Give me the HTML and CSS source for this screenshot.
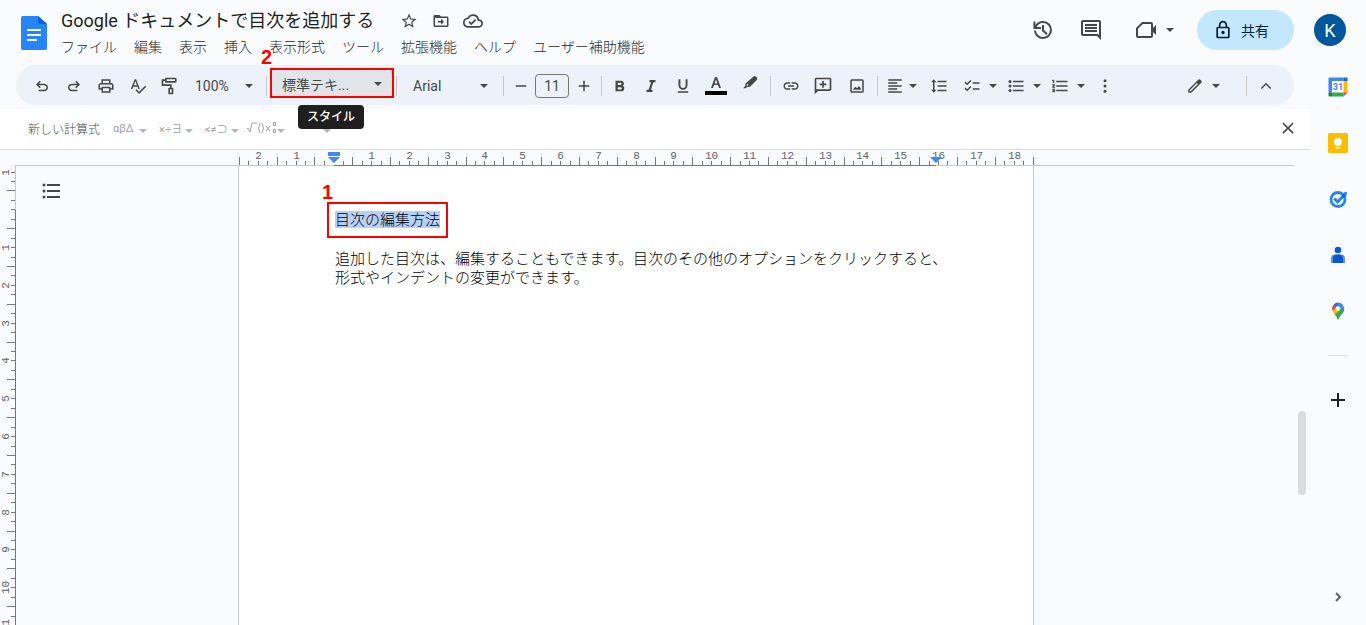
FILE: index.html
```html
<!DOCTYPE html>
<html lang="ja">
<head>
<meta charset="utf-8">
<title>Google ドキュメントで目次を追加する</title>
<link rel="stylesheet" href="styles.css">
</head>
<body>
<div class="app">
  <header class="header">
    <a class="logo" href="#" aria-label="ドキュメント ホーム">
      <svg width="26" height="34" viewBox="0 0 26 34"><path fill="#2684fc" d="M2 0h15l9 8v24a2 2 0 0 1-2 2H2a2 2 0 0 1-2-2V2a2 2 0 0 1 2-2z"/><path fill="#0066da" d="M17 0l9 8h-7a2 2 0 0 1-2-2z"/><path fill="#fff" d="M6 13h14v2H6zM6 18h14v2H6zM6 23h10v2H6z"/></svg>
    </a>
    <div class="heading">
      <div class="title-row">
        <h1 class="title">Google ドキュメントで目次を追加する</h1>
        <button class="mini" aria-label="スター"><svg class="i18" viewBox="0 0 24 24"><path d="M22 9.24l-7.19-.62L12 2 9.19 8.63 2 9.24l5.46 4.73L5.82 21 12 17.27 18.18 21l-1.63-7.03L22 9.24zM12 15.4l-3.76 2.27 1-4.28-3.32-2.88 4.38-.38L12 6.1l1.71 4.04 4.38.38-3.32 2.88 1 4.28L12 15.4z"/></svg></button>
        <button class="mini" aria-label="移動"><svg class="i18" viewBox="0 0 24 24"><path d="M20 6h-8l-2-2H4c-1.1 0-2 .9-2 2v12c0 1.1.9 2 2 2h16c1.1 0 2-.9 2-2V8c0-1.1-.9-2-2-2zm0 12H4V8h16v10zm-8-1l4-4-4-4v3H8v2h4v3z"/></svg></button>
        <button class="mini" aria-label="保存状況"><svg class="i20" viewBox="0 0 24 24"><path d="M19.35 10.04A7.49 7.49 0 0 0 12 4C9.11 4 6.6 5.64 5.35 8.04A5.994 5.994 0 0 0 0 14c0 3.31 2.69 6 6 6h13c2.76 0 5-2.24 5-5 0-2.64-2.05-4.78-4.65-4.96zM19 18H6c-2.21 0-4-1.79-4-4 0-2.05 1.53-3.76 3.56-3.97l1.07-.11.5-.95A5.469 5.469 0 0 1 12 6c2.62 0 4.88 1.86 5.39 4.43l.3 1.5 1.53.11A2.98 2.98 0 0 1 22 15c0 1.65-1.35 3-3 3zm-9-3.82l-2.09-2.09L6.5 13.5 10 17l6.01-6.01-1.41-1.41z"/></svg></button>
      </div>
      <nav class="menus">
        <button>ファイル</button><button>編集</button><button>表示</button><button>挿入</button><button>表示形式</button><button>ツール</button><button>拡張機能</button><button>ヘルプ</button><button>ユーザー補助機能</button>
      </nav>
    </div>
    <div class="actions">
      <button class="act" aria-label="変更履歴"><svg class="i24" viewBox="0 0 24 24"><path d="M13 3a9 9 0 0 0-7.6 4.2V3.5H3.4V11H11V9H6.6A7 7 0 1 1 6 12.500H4A9 9 0 1 0 13 3zm-1 4v6l4.300 4 1.400-1.400L14 12V7z"/></svg></button>
      <button class="act comments" aria-label="コメント"><svg class="i24" viewBox="0 0 24 24"><path d="M22 4c0-1.100-.9-2-2-2H4c-1.100 0-2 .9-2 2v12c0 1.100.9 2 2 2h14l4 4V4zm-2 13l-1-1H4V4h16v13zM6 12h12v2H6zM6 9h12v2H6zM6 6h12v2H6z"/></svg></button>
      <button class="act meet" aria-label="会議"><svg class="i24" viewBox="0 0 24 24"><path d="M17 4H8L2 10v8a2 2 0 0 0 2 2h13a2 2 0 0 0 2-2V6a2 2 0 0 0-2-2zm0 14H4v-7.200L8.800 6H17zM22 7l-4 4v2l4 4z"/></svg><span class="caret"></span></button>
      <button class="share"><svg class="i20" viewBox="0 0 24 24"><path d="M18 8h-1V6A5 5 0 0 0 7 6v2H6a2 2 0 0 0-2 2v10c0 1.100.9 2 2 2h12a2 2 0 0 0 2-2V10a2 2 0 0 0-2-2zM9 6a3 3 0 0 1 6 0v2H9zm9 14H6V10h12zm-6-3a2 2 0 1 0 0-4 2 2 0 0 0 0 4z"/></svg>共有</button>
      <button class="avatar" aria-label="アカウント">K</button>
    </div>
  </header>

  <main class="editor">
    <div class="toolbar" role="toolbar">
      <button class="tool" aria-label="元に戻す"><svg class="i18" viewBox="0 0 24 24"><path d="M7.500 19v-2h7.100c2 0 3.400-1.300 3.400-3s-1.400-3-3.400-3H7.800l2.600 2.600L9 15l-5-5 5-5 1.400 1.400L7.800 9h6.800c3.100 0 5.400 2.100 5.400 5s-2.300 5-5.400 5z"/></svg></button>
      <button class="tool" aria-label="やり直し"><svg class="i18" viewBox="0 0 24 24"><path d="M16.500 19v-2H9.400c-2 0-3.400-1.300-3.400-3s1.400-3 3.400-3h6.800l-2.600 2.600L15 15l5-5-5-5-1.400 1.400L16.200 9H9.400C6.300 9 4 11.100 4 14s2.300 5 5.400 5z"/></svg></button>
      <button class="tool" aria-label="印刷"><svg class="i18" viewBox="0 0 24 24"><path d="M19 8h-1V3H6v5H5c-1.660 0-3 1.340-3 3v6h4v4h12v-4h4v-6c0-1.660-1.340-3-3-3zM8 5h8v3H8V5zm8 12v2H8v-4h8v2zm2-2v-2H6v2H4v-4c0-.55.45-1 1-1h14c.55 0 1 .45 1 1v4h-2z"/></svg></button>
      <button class="tool" aria-label="スペルチェック"><svg class="i18" viewBox="0 0 24 24"><path d="M12.450 16h2.090L9.430 3H7.570L2.460 16h2.090l1.120-3h5.640l1.140 3zm-6.020-5L8.500 5.480 10.570 11H6.430zm15.160.59l-8.090 8.090L9.830 16l-1.410 1.410 5.090 5.090L23 13l-1.410-1.410z"/></svg></button>
      <button class="tool" aria-label="書式を貼り付け"><svg class="i20" viewBox="0 0 24 24"><path d="M18 2H7a1 1 0 0 0-1 1v1H2v8h10v2h-1a1 1 0 0 0-1 1v6a1 1 0 0 0 1 1h4a1 1 0 0 0 1-1v-6a1 1 0 0 0-1-1h-1v-4H4V6h2v1a1 1 0 0 0 1 1h11a2 2 0 0 0 2-2V4a2 2 0 0 0-2-2zm0 4H8V4h10zm-4 14h-2v-4h2z"/></svg></button>
      <button class="pick zoom">100%<span class="caret"></span></button>
      <span class="sep"></span>
      <div class="style-wrap">
        <button class="pick style" aria-describedby="style-tip">標準テキ...<span class="caret"></span></button>
        <span class="mark mark-style">2</span>
        <span class="tip" id="style-tip" role="tooltip">スタイル</span>
      </div>
      <span class="sep"></span>
      <button class="pick font">Arial<span class="caret"></span></button>
      <span class="sep"></span>
      <button class="tool narrow" aria-label="フォントサイズを縮小"><svg class="i18" viewBox="0 0 24 24"><path d="M5 11h14v2H5z"/></svg></button>
      <input class="size" type="text" value="11" aria-label="フォントサイズ">
      <button class="tool snug" aria-label="フォントサイズを拡大"><svg class="i18" viewBox="0 0 24 24"><path d="M19 13h-6v6h-2v-6H5v-2h6V5h2v6h6z"/></svg></button>
      <span class="sep"></span>
      <button class="tool snug" aria-label="太字"><svg class="i18" viewBox="0 0 24 24"><path d="M15.600 11.800c1-.7 1.600-1.800 1.600-2.800 0-2.300-1.700-4-4-4H6v14h8c2.100 0 3.700-1.700 3.700-3.800 0-1.500-.8-2.800-2.100-3.400zM9 7.500h3.500a1.500 1.500 0 0 1 0 3H9zm4 9H9v-3h4a1.500 1.500 0 0 1 0 3z"/></svg></button>
      <button class="tool" aria-label="斜体"><svg class="i18" viewBox="0 0 24 24"><path d="M10 4v3h2.200l-3.400 10H6v3h8v-3h-2.200l3.400-10H18V4z"/></svg></button>
      <button class="tool" aria-label="下線"><svg class="i18" viewBox="0 0 24 24"><path d="M12 17a6 6 0 0 0 6-6V3h-2.500v8a3.500 3.500 0 0 1-7 0V3H6v8a6 6 0 0 0 6 6zm-7 2v2h14v-2z"/></svg></button>
      <button class="tool wide" aria-label="文字色"><svg class="i22" viewBox="0 0 22 22"><path d="M10 2h2l4 11h-2l-1-3H9l-1 3H6zm1 2.300L9.600 8.500h2.800z"/><path fill="#000" d="M0 16h22v4H0z"/></svg></button>
      <button class="tool wider" aria-label="ハイライト"><svg class="i22" viewBox="0 0 22 22"><path fill-rule="evenodd" d="M14.500 1.600a1.700 1.700 0 0 1 2.400 0l.9.900a1.700 1.700 0 0 1 0 2.400l-7 7-2.800.2-1.200 1.200H4l2.200-2.300.3-2.500zM8.300 9l-.6.700v1.100h1.100l.8-.8z"/></svg></button>
      <span class="sep"></span>
      <button class="tool wide" aria-label="リンクを挿入"><svg class="i18" viewBox="0 0 24 24"><path d="M3.900 12c0-1.710 1.390-3.100 3.100-3.100h4V7H7c-2.760 0-5 2.240-5 5s2.240 5 5 5h4v-1.900H7c-1.710 0-3.100-1.390-3.100-3.100zM8 13h8v-2H8v2zm9-6h-4v1.900h4c1.710 0 3.100 1.390 3.100 3.100s-1.390 3.100-3.100 3.100h-4V17h4c2.760 0 5-2.240 5-5s-2.240-5-5-5z"/></svg></button>
      <button class="tool" aria-label="コメントを追加"><svg class="i20" viewBox="0 0 24 24"><path d="M20 2H4a2 2 0 0 0-2 2v18l4-4h14a2 2 0 0 0 2-2V4a2 2 0 0 0-2-2zm0 14H4V4h16zm-9-2h2v-3h3V9h-3V6h-2v3H8v2h3z"/></svg></button>
      <button class="tool wider" aria-label="画像を挿入"><svg class="i18" viewBox="0 0 24 24"><path d="M19 3H5a2 2 0 0 0-2 2v14c0 1.100.9 2 2 2h14a2 2 0 0 0 2-2V5a2 2 0 0 0-2-2zm0 16H5V5h14zM7 17h10v-2l-2.500-3-2.500 3-2-2-3 3z"/></svg></button>
      <span class="sep"></span>
      <button class="combo align" aria-label="配置"><svg class="i18" viewBox="0 0 24 24"><path d="M15 15H3v2h12zm0-8H3v2h12zM3 13h18v-2H3zm0 8h18v-2H3zM3 3v2h18V3z"/></svg><span class="caret"></span></button>
      <button class="tool" aria-label="行間隔"><svg class="i18" viewBox="0 0 24 24"><path d="M6 7h2.500L5 3 1.500 7H4v10H1.500L5 21l3.500-4H6zm4-2v2h12V5zm0 14h12v-2H10zm0-6h12v-2H10z"/></svg></button>
      <button class="combo" aria-label="チェックリスト"><svg class="i18" viewBox="0 0 24 24"><path d="M22 7h-9v2h9zm0 8h-9v2h9zM5.500 11L2 7.500l1.400-1.400 2.100 2.100L9.800 4l1.400 1.400zm0 8L2 15.500l1.400-1.400 2.100 2.100L9.800 12l1.400 1.400z"/></svg><span class="caret"></span></button>
      <button class="combo" aria-label="箇条書き"><svg class="i18" viewBox="0 0 24 24"><path d="M8 5h14v2H8zM8 11h14v2H8zM8 17h14v2H8z"/><circle cx="4" cy="6" r="2"/><circle cx="4" cy="12" r="2"/><circle cx="4" cy="18" r="2"/></svg><span class="caret"></span></button>
      <button class="combo" aria-label="番号付きリスト"><svg class="i18" viewBox="0 0 24 24"><path d="M2 17h2v.5H3v1h1v.5H2v1h3v-4H2zm1-9h1V4H2v1h1zm-1 3h1.800L2 13.100v.9h3v-1H3.200L5 10.900V10H2z" stroke="#444746" stroke-width=".7"/><path d="M7 5v2h15V5zm0 14h15v-2H7zm0-6h15v-2H7z"/></svg><span class="caret"></span></button>
      <button class="tool wider" aria-label="その他"><svg class="i18" viewBox="0 0 24 24"><circle cx="12" cy="5" r="2"/><circle cx="12" cy="12" r="2"/><circle cx="12" cy="19" r="2"/></svg></button>
      <button class="combo mode" aria-label="編集モード"><svg class="i18" viewBox="0 0 24 24"><path d="M20.400 4.900l-1.300-1.300a2 2 0 0 0-2.800 0L3 16.900V21h4.100L20.400 7.700a2 2 0 0 0 0-2.800zM6.300 19H5v-1.300l9.600-9.700L16 9.400z"/></svg><span class="caret"></span></button>
      <span class="sep"></span>
      <button class="tool" aria-label="メニューを非表示"><svg class="i18" viewBox="0 0 24 24"><path d="M6.400 15.900L5 14.500l7-7 7 7-1.400 1.400L12 10.300z"/></svg></button>
    </div>

    <div class="equation">
      <button class="new-eq">新しい計算式</button>
      <button class="eq">αβΔ<span class="caret"></span></button>
      <button class="eq">×÷∃<span class="caret"></span></button>
      <button class="eq relations">&lt;≠⊃<span class="caret"></span></button>
      <button class="eq operations" aria-label="数学演算"><svg width="30" height="12" viewBox="0 0 30 12"><path d="M0 7l1-1 2 4 2-9h5M13 1q-3 5 0 10M15 1q3 5 0 10M19 4l4 5M23 4l-4 5M26.500.5h2v3h-2zM26.500 7.500h2v3h-2z"/></svg><span class="caret"></span></button>
      <button class="eq" aria-label="矢印"><span></span><span class="caret"></span></button>
      <button class="close" aria-label="閉じる"><svg class="i18" viewBox="0 0 24 24"><path d="M19.500 6L18 4.500l-6 6-6-6L4.500 6l6 6-6 6L6 19.500l6-6 6 6 1.500-1.500-6-6z"/></svg></button>
    </div>

    <div class="ruler-row">
      <svg class="ruler-x" id="ruler-x" width="796" height="16"></svg>
    </div>

    <div class="workspace">
      <svg class="ruler-y" id="ruler-y" width="16"></svg>
      <div class="canvas">
        <button class="outline" aria-label="目次と概要を表示"><svg width="18" height="16" viewBox="0 0 18 16"><path d="M5 1h13v2H5zM5 7h13v2H5zM5 13h13v2H5z"/><circle cx="2" cy="2" r="1.500"/><circle cx="2" cy="8" r="1.500"/><circle cx="2" cy="14" r="1.500"/></svg></button>
        <article class="page">
          <p class="subject"><span class="selected">目次の編集方法</span><span class="mark mark-text">1</span></p>
          <p>追加した目次は、編集することもできます。目次のその他のオプションをクリックすると、形式やインデントの変更ができます。</p>
        </article>
      </div>
      <div class="scroll"><div class="thumb"></div></div>
    </div>
  </main>

  <aside class="side">
    <button aria-label="カレンダー"><svg width="20" height="20" viewBox="0 0 20 20"><path fill="#fff" d="M4 4h12v12H4z"/><path fill="#4285f4" d="M1.500.5H15.500V4H4v11.500H.5v-14a1 1 0 0 1 1-1z"/><path fill="#1967d2" d="M15.500.5h3a1 1 0 0 1 1 1V4h-4z"/><path fill="#fbbc04" d="M15.500 4h4v11.500h-4z"/><path fill="#34a853" d="M4 15.500h11.500v4H4z"/><path fill="#188038" d="M.5 15.500H4v4H1.500a1 1 0 0 1-1-1z"/><path fill="#ea4335" d="M15.500 15.500h4l-4 4z"/><text class="day" x="10" y="13" text-anchor="middle">31</text></svg></button>
    <button aria-label="Keep"><svg width="20" height="20" viewBox="0 0 20 20"><rect width="20" height="20" rx="1.500" fill="#fbbc04"/><path fill="#fff" d="M10 5a4 4 0 0 0-2.200 7.400V13h4.400v-.6A4 4 0 0 0 10 5zM7.800 14h4.400v1.500H7.800z"/></svg></button>
    <button aria-label="ToDo リスト"><svg width="20" height="20" viewBox="0 0 20 20"><circle cx="10" cy="10.500" r="7" stroke="#2684fc" stroke-width="2.800"/><path d="M6.300 9.500l3.300 3.300 6-6" stroke="#2684fc" stroke-width="3"/><path d="M14.500 8l3-3" stroke="#0066da" stroke-width="3"/><circle cx="17.500" cy="4.500" r="1.700" fill="#2684fc"/></svg></button>
    <button aria-label="連絡先"><svg width="20" height="20" viewBox="0 0 20 20"><circle cx="10" cy="5" r="3.300" fill="#0b57d0"/><path fill="#5b93f5" d="M7 9.500h6a4 4 0 0 1 4 4V18H3v-4.500a4 4 0 0 1 4-4z"/><path fill="#0b57d0" d="M8 9.500h4q3 1 3 4V18H5v-4.500q0-3 3-4z"/></svg></button>
    <button aria-label="マップ"><svg width="20" height="20" viewBox="0 0 20 20"><path fill="#34a853" d="M15.500 5q2 4-1 7.500Q11 16 10.700 18q-.7 1-1.400 0-.3-2-2.800-5z"/><path fill="#fbbc04" d="M4.700 10L8 6.500l3.500 3L6.800 13.500q-1.500-1.600-2.100-3.500z"/><path fill="#ea4335" d="M5.500 3.800L8.500 6l-3.800 4Q3.200 6.800 5.500 3.800z"/><path fill="#1a73e8" d="M5.500 3.800Q7.500 1.500 10 1.500l.5 3-2.300 2.600z"/><path fill="#4285f4" d="M10 1.500q3.800 0 5.500 3.500L11 9.500 8.500 6z"/><circle cx="10" cy="7.500" r="2.300" fill="#fff"/></svg></button>
    <hr>
    <button class="add" aria-label="アドオンを取得"><svg width="14" height="14" viewBox="0 0 14 14"><path fill="#1f1f1f" d="M6 0h2v6h6v2H8v6H6V8H0V6h6z"/></svg></button>
    <button class="hide" aria-label="サイドパネルを非表示"><svg width="10" height="12" viewBox="0 0 10 12" class="chev"><path d="M3 2l4 4-4 4"/></svg></button>
  </aside>
</div>
<script src="rulers.js"></script>
</body>
</html>
```

FILE: styles.css
```css
* { box-sizing: border-box; }

body {
  margin: 0;
  background: #f9fbfd;
  color: #1f1f1f;
  font-family: "Roboto", "Noto Sans CJK JP", sans-serif;
  font-size: 14px;
}

button {
  display: flex;
  align-items: center;
  margin: 0;
  padding: 0;
  border: 0;
  background: none;
  color: inherit;
  font: inherit;
}

svg { display: block; flex: none; fill: #444746; }
.i18 { width: 18px; height: 18px; }
.i20 { width: 20px; height: 20px; }
.i22 { width: 22px; height: 22px; }
.i24 { width: 24px; height: 24px; }

.caret {
  flex: none;
  width: 8px;
  height: 4px;
  background: #444746;
  clip-path: polygon(0 0, 100% 0, 50% 100%);
}

.app {
  display: grid;
  grid-template: auto minmax(0, 1fr) / minmax(0, 1fr) 56px;
  height: 100vh;
  overflow: hidden;
}

/* Header */
.header {
  grid-column: 1 / -1;
  display: flex;
  padding: 10px 20px 0 21px;
}
.logo { padding: 6px 14px 0 0; }
.title-row { display: flex; align-items: center; height: 22px; }
.title {
  margin: 0 25px 0 0;
  font-size: 18px;
  font-weight: 400;
  line-height: 22px;
}
.mini { justify-content: center; width: 20px; height: 20px; margin-right: 12px; }
.menus { display: flex; gap: 17px; line-height: 20px; padding: 5px 0 2px; font-weight: 300; }
.actions { display: flex; align-items: center; height: 40px; margin-left: auto; }
.act { margin-right: 25px; }
.comments { margin-right: 31px; }
.meet { gap: 8px; margin-right: 23px; }
.share {
  gap: 8px;
  height: 40px;
  margin-right: 20px;
  padding: 0 25px 0 16px;
  border-radius: 20px;
  background: #c2e7ff;
  color: #001d35;
}
.share svg { fill: #001d35; }
.avatar {
  justify-content: center;
  width: 32px;
  height: 32px;
  border-radius: 50%;
  background: #01579b;
  color: #fff;
  font-size: 18px;
}

/* Editor */
.editor { display: flex; flex-direction: column; min-height: 0; }
.toolbar {
  display: flex;
  align-items: center;
  height: 40px;
  margin: 6px 16px 4px;
  padding: 2px 12px 0 10px;
  border-radius: 20px;
  background: #edf2fa;
  color: #444746;
}
.tool { flex: none; justify-content: center; width: 32px; height: 30px; }
.tool.narrow { width: 28px; }
.tool.snug { width: 30px; }
.tool.wide { width: 33px; }
.tool.wider { width: 36px; }
.pick { justify-content: space-between; height: 30px; white-space: nowrap; }
.zoom { width: 78px; padding: 0 11px 0 9px; }
.font { width: 101px; padding: 0 13px; }
.sep { flex: none; width: 1px; height: 20px; margin: 0 3px 0 2px; background: #c7c7c7; }
.size {
  width: 34px;
  height: 24px;
  padding: 0;
  border: 1px solid #747775;
  border-radius: 4px;
  background: transparent;
  color: #444746;
  font: inherit;
  text-align: center;
}
.combo { flex: none; gap: 8px; width: 44px; height: 30px; padding-left: 8px; }
.align { gap: 5px; width: 42px; padding-left: 5px; }
.mode { margin-left: auto; margin-right: 22px; }

.style-wrap { position: relative; margin-top: -6px; }
.style {
  width: 124px;
  padding: 2px 10px 0;
  border: 2px solid #f00;
  background: #e1e5ea;
}
.mark { position: absolute; color: #f00; font: bold 20px/20px "Liberation Sans", sans-serif; }
.mark-style {
  left: -9px;
  top: -21px;
  text-shadow: 2px 0 #fff, -2px 0 #fff, 0 2px #fff, 0 -2px #fff, 1px 1px #fff, -1px 1px #fff, 1px -1px #fff, -1px -1px #fff;
}
.tip {
  position: absolute;
  z-index: 2;
  left: 28px;
  top: 37px;
  padding: 0 9px;
  border-radius: 4px;
  background: #1f1f1f;
  color: #fff;
  font-size: 12px;
  font-weight: 500;
  line-height: 24px;
  white-space: nowrap;
}

.equation {
  display: flex;
  align-items: center;
  height: 41px;
  padding: 0 13px 2px 28px;
  border-bottom: 1px solid #dadce0;
  background: #fff;
  color: #444746;
  font-size: 12px;
}
.new-eq { margin-right: 13px; font-weight: 300; }
.eq {
  justify-content: space-between;
  width: 34px;
  height: 20px;
  margin-right: 12px;
  color: #a0a0a0;
  font-size: 11px;
}
.eq .caret { margin-top: 6px; background: #b4b4b4; }
.eq svg { fill: none; stroke: #a0a0a0; }
.relations { margin-right: 8px; }
.operations { width: 38px; }
.close { justify-content: center; width: 18px; height: 20px; margin-left: auto; }

.ruler-row { display: flex; justify-content: center; padding: 0 54px 0 16px; margin-bottom: -1px; }
.ruler-x, .ruler-y { fill: none; stroke: #747775; position: relative; z-index: 1; }
.ruler-y { height: 100%; }
.num { fill: #5f6368; stroke: none; font: 11px "Liberation Mono", monospace; text-anchor: middle; }
.soft { stroke: #c7c7c7; }
.indent { fill: #4285f4; stroke: none; }

.workspace { display: flex; flex: 1; min-height: 0; }
.canvas {
  flex: 1;
  display: grid;
  grid-template-columns: 1fr 796px 1fr;
  padding-right: 38px;
  border-top: 1px solid #c7c7c7;
}
.outline { width: 18px; height: 16px; margin: 17px 0 0 26px; }
.page {
  padding: 44px 84px 0 96px;
  border: solid #c7c7c7;
  border-width: 0 1px;
  background: #fff;
  color: #000;
  font-family: "Liberation Sans", "Noto Sans CJK JP", sans-serif;
  font-size: 15px;
  font-weight: 300;
  line-height: 19px;
}
.page p { margin: 0 0 20px; }
.subject { position: relative; }
.selected {
  position: relative;
  background: #b6d0f8;
}
.selected::after {
  content: "";
  position: absolute;
  inset: -9px -8px -10px;
  border: 2px solid #f00;
}
.mark-text { left: -13px; top: -28px; }
.scroll { width: 16px; padding: 246px 4px 0; }
.thumb { height: 84px; border-radius: 4px; background: #dadce0; }

/* Side panel */
.side { display: flex; flex-direction: column; align-items: center; }
.side svg { fill: none; }
.side button { justify-content: center; width: 40px; height: 56px; }
.side hr { width: 20px; margin: 16px 0; border: 0; border-top: 1px solid #dadce0; }
.day { fill: #4285f4; font: bold 9px "Roboto", sans-serif; }
.side .hide { margin-top: auto; }
.chev { stroke: #5f6368; stroke-width: 2; }
```

FILE: rulers.js
```js
const CM = 96 / 2.54;
const NS = "http://www.w3.org/2000/svg";

function add(parent, tag, attrs, text) {
  const el = document.createElementNS(NS, tag);
  for (const key in attrs) el.setAttribute(key, attrs[key]);
  if (text) el.textContent = text;
  parent.appendChild(el);
}

// Horizontal ruler: origin at the left margin, quarter-centimetre ticks
const rx = document.getElementById("ruler-x");
const originX = 95.3;
for (let q = -10; q <= 74; q++) {
  const x = Math.round(originX + q * CM / 4) + 0.5;
  const half = Math.abs(q) % 4 === 2;
  if (q !== 0) add(rx, "path", { d: `M${x} ${half ? 7 : 11}V15` });
  if (q % 4 === 0 && q !== 0) {
    add(rx, "text", { class: "num", x: x, y: 9 }, String(Math.abs(q / 4)));
  }
}
add(rx, "path", { class: "soft", d: "M0 15.5H796" });
add(rx, "path", { d: "M96 15.5H698" });
add(rx, "path", { class: "indent", d: "M90 2h12v4H90zM90 7h12l-6 6zM692 7h12l-6 6z" });

// Vertical ruler: origin at the top margin
const ry = document.getElementById("ruler-y");
const originY = 44.3;
for (let q = -4; q <= 44; q++) {
  const y = Math.round(originY + q * CM / 4) + 0.5;
  const half = Math.abs(q) % 4 === 2;
  add(ry, "path", { d: `M${half ? 7 : 11} ${y}H15` });
  if (q % 4 === 0 && q !== 0) {
    add(ry, "text", { class: "num", transform: `translate(9 ${y}) rotate(-90)` }, String(Math.abs(q / 4)));
  }
}
add(ry, "path", { class: "soft", d: "M15.5 0V45" });
add(ry, "path", { d: "M15.5 45V3000" });
```
